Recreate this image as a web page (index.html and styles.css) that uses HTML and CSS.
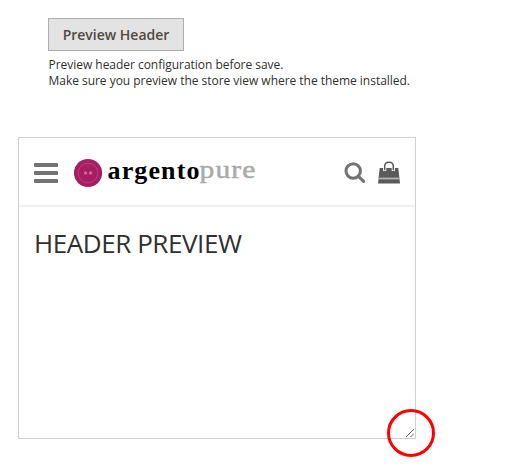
FILE: index.html
```html
<!DOCTYPE html>
<html lang="en">
<head>
<meta charset="utf-8">
<title>Header preview</title>
<link rel="stylesheet" href="styles.css">
</head>
<body>
<section class="field">
  <button class="preview-button" type="button">Preview Header</button>
  <p class="note">Preview header configuration before save.<br>Make sure you preview the store view where the theme installed.</p>
</section>
<main class="frame">
  <header class="bar">
    <svg class="menu" width="24" height="20" viewBox="0 0 24 20"><g fill="#737373"><rect width="24" height="4" rx=".7"/><rect y="8" width="24" height="4" rx=".7"/><rect y="16" width="24" height="4" rx=".7"/></g></svg>
    <svg class="logo" width="184" height="36" viewBox="0 0 184 36">
      <circle cx="14" cy="18" r="14.1" fill="#a51e61"/>
      <circle cx="14" cy="18" r="9.8" fill="none" stroke="#c64486" stroke-width=".8"/>
      <circle cx="11.5" cy="18" r="1.7" fill="#dc609d"/>
      <circle cx="16.6" cy="18" r="1.7" fill="#dc609d"/>
      <text class="name" x="33.5" y="24" textLength="92">argento</text>
      <text class="name-light" x="125.5" y="23" textLength="57" lengthAdjust="spacingAndGlyphs">pure</text>
    </svg>
    <svg class="search" width="22" height="22" viewBox="0 0 22 22" fill="none" stroke="#737373"><circle cx="9.2" cy="9" r="7.2" stroke-width="3"/><path d="M14.2 14.2l5.4 5.2" stroke-width="3.2" stroke-linecap="round"/></svg>
    <svg class="bag" width="22" height="23" viewBox="0 0 22 23"><path d="M1.7 7h18.6L22 22.5H0z" fill="#5a5a5a"/><path d="M0 16.6h22v1.8H0z" fill="#b4b4b4"/><path d="M6.7 10V5.2C6.7 -.1 15.3 -.1 15.3 5.2V10" fill="none" stroke="#fff" stroke-width="3.2"/><path d="M6.7 9.3V5.2C6.7 -.1 15.3 -.1 15.3 5.2v4.1" fill="none" stroke="#5a5a5a" stroke-width="1.5"/></svg>
  </header>
  <h1 class="title">HEADER PREVIEW</h1>
  <svg class="grip" width="8" height="8" viewBox="0 0 8 8" stroke="#555" stroke-width=".9"><path d="M0 8l8-8M4.5 8L8 4.5"/></svg>
  <span class="marker"></span>
</main>
</body>
</html>
```
FILE: styles.css
```css
* { box-sizing: border-box; }
body {
  height: 468px;
  margin: 0;
  padding: 18px 0 0 18px;
  background: #fff;
  color: #303030;
  font-family: "Open Sans", "Noto Sans", sans-serif;
}
.field { height: 119px; padding-left: 30px; }
.preview-button {
  display: block;
  width: 136px;
  height: 33px;
  padding: 0;
  border: 1px solid #adadad;
  background: #e3e3e3;
  color: #514943;
  font: 600 14px/31px "Open Sans", "Noto Sans", sans-serif;
}
.note {
  margin: 6px 0 0 .5px;
  font-size: 12px;
  line-height: 16px;
  letter-spacing: -.03px;
  white-space: nowrap;
}
.frame {
  position: relative;
  width: 398px;
  height: 302px;
  border: 1px solid #d0d0d0;
}
.bar {
  display: flex;
  align-items: center;
  height: 69px;
  padding: 3px 15px 0;
  border-bottom: 2px solid #f0f0f0;
}
.logo { margin-left: 16px; }
.name, .name-light {
  font-family: "Liberation Serif", serif;
  font-size: 26px;
  font-weight: 700;
}
.name-light {
  fill: #aaa;
  stroke: #aaa;
  stroke-width: .5px;
  font-weight: 400;
  letter-spacing: 1px;
}
.search { margin-left: auto; }
.bag { margin: -2px 0 0 12px; }
.title {
  margin: 18px 0 0 15px;
  font-size: 26px;
  font-weight: 400;
  line-height: 36px;
  letter-spacing: -.43px;
  white-space: nowrap;
}
.grip { position: absolute; right: 1px; bottom: 1px; }
.marker {
  position: absolute;
  right: -20px;
  bottom: -19px;
  width: 48px;
  height: 48px;
  border: 3px solid #f00;
  border-radius: 50%;
}
```
